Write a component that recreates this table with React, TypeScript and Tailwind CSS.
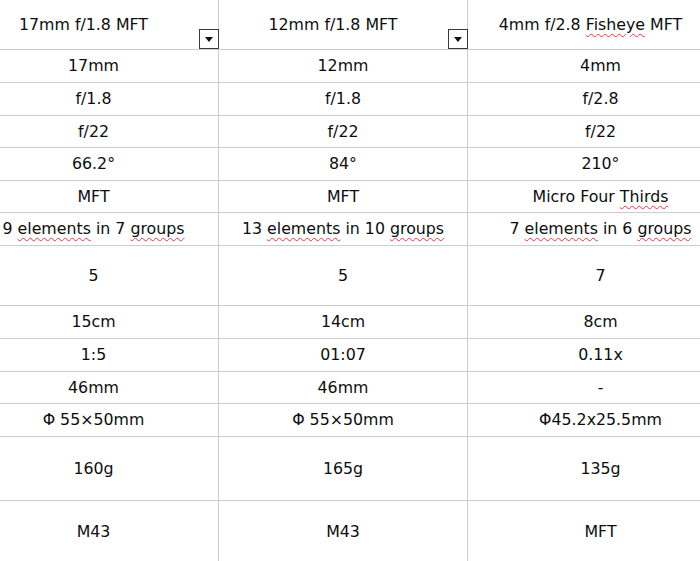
import type { ReactNode } from 'react'

const Sq = ({ children }: { children: ReactNode }) => (
  <span className="underline decoration-wavy decoration-[#e23a3a] decoration-1 underline-offset-[3px]">{children}</span>
)

type Row = { h: string; cells: ReactNode[] }

const rows: Row[] = [
  { h: 'h-[33px]', cells: ['17mm', '12mm', '4mm'] },
  { h: 'h-[33px]', cells: ['f/1.8', 'f/1.8', 'f/2.8'] },
  { h: 'h-[32px]', cells: ['f/22', 'f/22', 'f/22'] },
  { h: 'h-[33px]', cells: ['66.2°', '84°', '210°'] },
  { h: 'h-[32px]', cells: ['MFT', 'MFT', <>Micro Four <Sq>Thirds</Sq></>] },
  {
    h: 'h-[33px]',
    cells: [
      <>9 <Sq>elements</Sq> in 7 <Sq>groups</Sq></>,
      <>13 <Sq>elements</Sq> in 10 <Sq>groups</Sq></>,
      <>7 <Sq>elements</Sq> in 6 <Sq>groups</Sq></>,
    ],
  },
  { h: 'h-[60px]', cells: ['5', '5', '7'] },
  { h: 'h-[33px]', cells: ['15cm', '14cm', '8cm'] },
  { h: 'h-[33px]', cells: ['1:5', '01:07', '0.11x'] },
  { h: 'h-[32px]', cells: ['46mm', '46mm', '-'] },
  { h: 'h-[33px]', cells: ['Φ 55×50mm', 'Φ 55×50mm', 'Φ45.2x25.5mm'] },
  { h: 'h-[64px]', cells: ['160g', '165g', '135g'] },
  { h: 'h-[62px]', cells: ['M43', 'M43', 'MFT'] },
]

const widths = ['w-[250px]', 'w-[249px]', 'w-[266px]']

function FilterButton() {
  return (
    <div className="absolute right-[-1px] bottom-0 w-[20px] h-[20px] border-[1.5px] border-[#3a3a3a] bg-white flex items-center justify-center">
      <svg width="8" height="5" viewBox="0 0 8 5">
        <path d="M0 0h8L4 5z" fill="#111" />
      </svg>
    </div>
  )
}

export default function App() {
  const headers: ReactNode[] = [
    '17mm f/1.8 MFT',
    '12mm f/1.8 MFT',
    <>4mm f/2.8 <Sq>Fisheye</Sq> MFT</>,
  ]

  return (
    <div
      className="w-[700px] h-[561px] overflow-hidden bg-white text-[#0d0d0d] text-[15.8px]"
      style={{ fontFamily: '"DejaVu Sans", Verdana, sans-serif' }}
    >
      <div className="ml-[-31px] w-[765px]">
        <div className="flex h-[50px]">
          {headers.map((c, i) => (
            <div
              key={i}
              className={`${widths[i]} relative shrink-0 border-r border-b border-[#cdcdcd] flex items-center justify-center pr-[20px]`}
            >
              <span className="whitespace-nowrap">{c}</span>
              <FilterButton />
            </div>
          ))}
        </div>
        {rows.map((r, ri) => (
          <div key={ri} className={`flex ${r.h}`}>
            {r.cells.map((c, i) => (
              <div
                key={i}
                className={`${widths[i]} shrink-0 border-r border-b border-[#cdcdcd] flex items-center justify-center`}
              >
                <span className="whitespace-nowrap">{c}</span>
              </div>
            ))}
          </div>
        ))}
      </div>
    </div>
  )
}
